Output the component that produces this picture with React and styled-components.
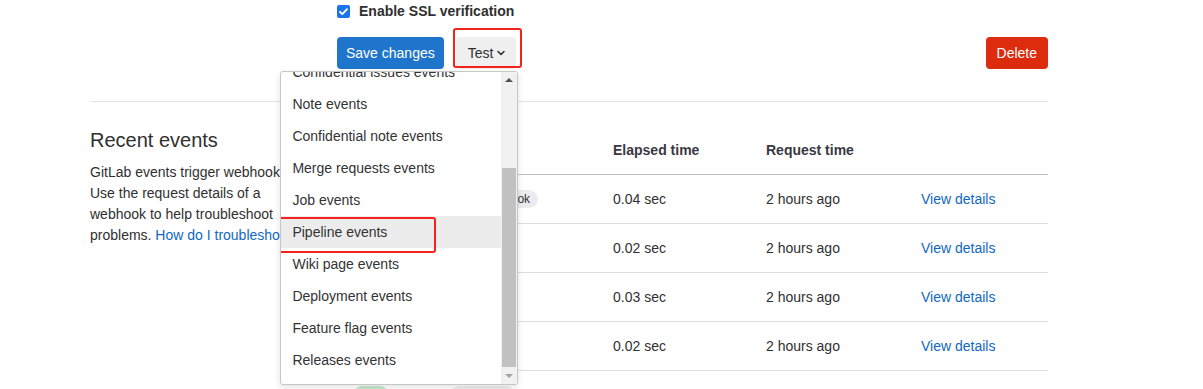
import React from "react";
import styled, { createGlobalStyle } from "styled-components";

const GlobalStyle = createGlobalStyle`
  html, body { margin: 0; padding: 0; background: #fff; }
  body {
    font-family: "Liberation Sans", Arial, sans-serif;
    font-size: 14px;
    color: #303030;
  }
  * { box-sizing: border-box; }
`;

const Page = styled.div`
  width: 958px;
  margin-left: 90px;
`;

const Section = styled.div`
  display: grid;
  grid-template-columns: 217px 711px;
  column-gap: 30px;
  margin-top: ${(p) => p.$top || 0}px;
`;

const CheckRow = styled.label`
  display: flex;
  align-items: center;
  gap: 9px;
  height: 20px;
  margin-top: 1px;
  font-weight: 700;
  color: #303030;
`;

const CheckBox = styled.span`
  width: 13px;
  height: 13px;
  border-radius: 2px;
  background: #1a73e8;
  display: inline-flex;
  align-items: center;
  justify-content: center;
`;

const ButtonRow = styled.div`
  display: flex;
  align-items: center;
  margin-top: 16px;
`;

const Button = styled.button`
  height: 32px;
  padding: ${(p) => p.$pad || "0 11px"};
  border: none;
  border-radius: 4px;
  font-family: inherit;
  font-size: 14px;
  display: inline-flex;
  align-items: center;
  gap: 3px;
  cursor: pointer;
  background: ${(p) =>
    p.$variant === "confirm" ? "#1f75cb" : p.$variant === "danger" ? "#dd2b0e" : "#efefef"};
  color: ${(p) => (p.$variant ? "#fff" : "#303030")};
`;

const TestWrap = styled.div`
  position: relative;
  margin-left: 12px;
`;

const DeleteSlot = styled.div`
  margin-left: auto;
`;

const Annotation = styled.div`
  position: absolute;
  border: 2px solid #f5221b;
  border-radius: 3px;
  pointer-events: none;
  z-index: 20;
`;

const TestMark = styled(Annotation)`
  left: -3px;
  top: -9px;
  width: 69px;
  height: 40px;
`;

const PipelineMark = styled(Annotation)`
  left: -5px;
  top: 1px;
  width: 160px;
  height: 36px;
`;

const Dropdown = styled.div`
  position: absolute;
  right: -2px;
  top: calc(100% + 2px);
  width: 238px;
  height: 314px;
  background: #fff;
  border: 1px solid #c6c6c6;
  border-radius: 3px;
  box-shadow: 0 2px 6px rgba(0, 0, 0, 0.12);
  display: flex;
  z-index: 10;
`;

const ListViewport = styled.div`
  flex: 1;
  overflow: hidden;
`;

const List = styled.ul`
  list-style: none;
  margin: -120px 0 0;
  padding: 8px 0;
`;

const Item = styled.li`
  position: relative;
  height: 32px;
  padding: 0 11px;
  display: flex;
  align-items: center;
  white-space: nowrap;
  color: #333;
  background: ${(p) => (p.$active ? "#ececec" : "transparent")};
`;

const Scrollbar = styled.div`
  width: 16px;
  background: #f1f1f1;
  display: flex;
  flex-direction: column;
`;

const ArrowCell = styled.div`
  height: 16px;
  display: flex;
  align-items: center;
  justify-content: center;
`;

const Triangle = styled.span`
  width: 0;
  height: 0;
  border-left: 4px solid transparent;
  border-right: 4px solid transparent;
  ${(p) =>
    p.$dir === "up"
      ? `border-bottom: 4px solid #505050;`
      : `border-top: 4px solid #a3a3a3;`}
`;

const Track = styled.div`
  flex: 1;
  display: flex;
  flex-direction: column;
  justify-content: flex-end;
  padding: 0 1px 1px;
`;

const Thumb = styled.div`
  height: 199px;
  background: #c1c1c1;
`;

const Divider = styled.hr`
  margin: 32px 0 0;
  border: none;
  border-top: 1px solid #e3e3e6;
  height: 0;
`;

const Heading = styled.h4`
  margin: 2px 0 0;
  font-size: 20px;
  line-height: 24px;
  font-weight: 400;
  color: #303030;
`;

const Description = styled.p`
  margin: 10px 0 0;
  line-height: 21px;
  color: #303030;
`;

const Link = styled.a`
  color: #1068bf;
  text-decoration: none;
`;

const Table = styled.div`
  display: flex;
  flex-direction: column;
`;

const Row = styled.div`
  display: grid;
  grid-template-columns: 97px 163px 153px 155px 143px;
  height: 49px;
  border-bottom: 1px solid ${(p) => (p.$head ? "#bfbfc3" : "#dcdcde")};
  font-weight: ${(p) => (p.$head ? 700 : 400)};
  color: ${(p) => (p.$head ? "#3a383f" : "#303030")};
`;

const Cell = styled.div`
  display: flex;
  align-items: center;
  padding: 0 16px;
  white-space: nowrap;
`;

const Badge = styled.span`
  display: inline-flex;
  align-items: center;
  height: 18px;
  padding: 0 8px;
  border-radius: 9px;
  font-size: 12px;
  background: ${(p) => (p.$tone === "success" ? "#c3e6cd" : "#ececef")};
  color: ${(p) => (p.$tone === "success" ? "#24663b" : "#333238")};
`;

const events = [
  "Push events",
  "Tag push events",
  "Issues events",
  "Confidential issues events",
  "Note events",
  "Confidential note events",
  "Merge requests events",
  "Job events",
  "Pipeline events",
  "Wiki page events",
  "Deployment events",
  "Feature flag events",
  "Releases events",
];

const rows = [
  { trigger: "Pipeline hook", elapsed: "0.04 sec" },
  { trigger: "Job hook", elapsed: "0.02 sec" },
  { trigger: "Job hook", elapsed: "0.03 sec" },
  { trigger: "Job hook", elapsed: "0.02 sec" },
  { trigger: "Job hook", elapsed: "0.02 sec" },
];

const Chevron = () => (
  <svg width="10" height="10" viewBox="0 0 10 10" aria-hidden="true">
    <path d="M2 3.5l3 3 3-3" fill="none" stroke="#303030" strokeWidth="1.6" strokeLinecap="round" strokeLinejoin="round" />
  </svg>
);

const Check = () => (
  <svg width="11" height="11" viewBox="0 0 11 11" aria-hidden="true">
    <path d="M2 5.8l2.3 2.3L9 3.2" fill="none" stroke="#fff" strokeWidth="1.9" strokeLinecap="round" strokeLinejoin="round" />
  </svg>
);

export default function App() {
  return (
    <>
      <GlobalStyle />
      <Page>
        <Section>
          <div />
          <div>
            <CheckRow>
              <CheckBox>
                <Check />
              </CheckBox>
              Enable SSL verification
            </CheckRow>
            <ButtonRow>
              <Button $variant="confirm" $pad="0 9px">Save changes</Button>
              <TestWrap>
                <Button $pad="0 10px 0 12px">
                  Test
                  <Chevron />
                </Button>
                <TestMark />
                <Dropdown>
                  <ListViewport>
                    <List>
                      {events.map((e) => (
                        <Item key={e} $active={e === "Pipeline events"}>
                          {e}
                          {e === "Pipeline events" && <PipelineMark />}
                        </Item>
                      ))}
                    </List>
                  </ListViewport>
                  <Scrollbar>
                    <ArrowCell>
                      <Triangle $dir="up" />
                    </ArrowCell>
                    <Track>
                      <Thumb />
                    </Track>
                    <ArrowCell>
                      <Triangle $dir="down" />
                    </ArrowCell>
                  </Scrollbar>
                </Dropdown>
              </TestWrap>
              <DeleteSlot>
                <Button $variant="danger">Delete</Button>
              </DeleteSlot>
            </ButtonRow>
          </div>
        </Section>
        <Divider />
        <Section $top={24}>
          <div>
            <Heading>Recent events</Heading>
            <Description>
              GitLab events trigger webhooks. Use the request details of a webhook to help troubleshoot
              problems. <Link href="#">How do I troubleshoot?</Link>
            </Description>
          </div>
          <Table>
            <Row $head>
              <Cell>Status</Cell>
              <Cell>Trigger</Cell>
              <Cell>Elapsed time</Cell>
              <Cell>Request time</Cell>
              <Cell />
            </Row>
            {rows.map((r, i) => (
              <Row key={i}>
                <Cell>
                  <Badge $tone="success">200</Badge>
                </Cell>
                <Cell>
                  <Badge>{r.trigger}</Badge>
                </Cell>
                <Cell>{r.elapsed}</Cell>
                <Cell>2 hours ago</Cell>
                <Cell>
                  <Link href="#">View details</Link>
                </Cell>
              </Row>
            ))}
          </Table>
        </Section>
      </Page>
    </>
  );
}
